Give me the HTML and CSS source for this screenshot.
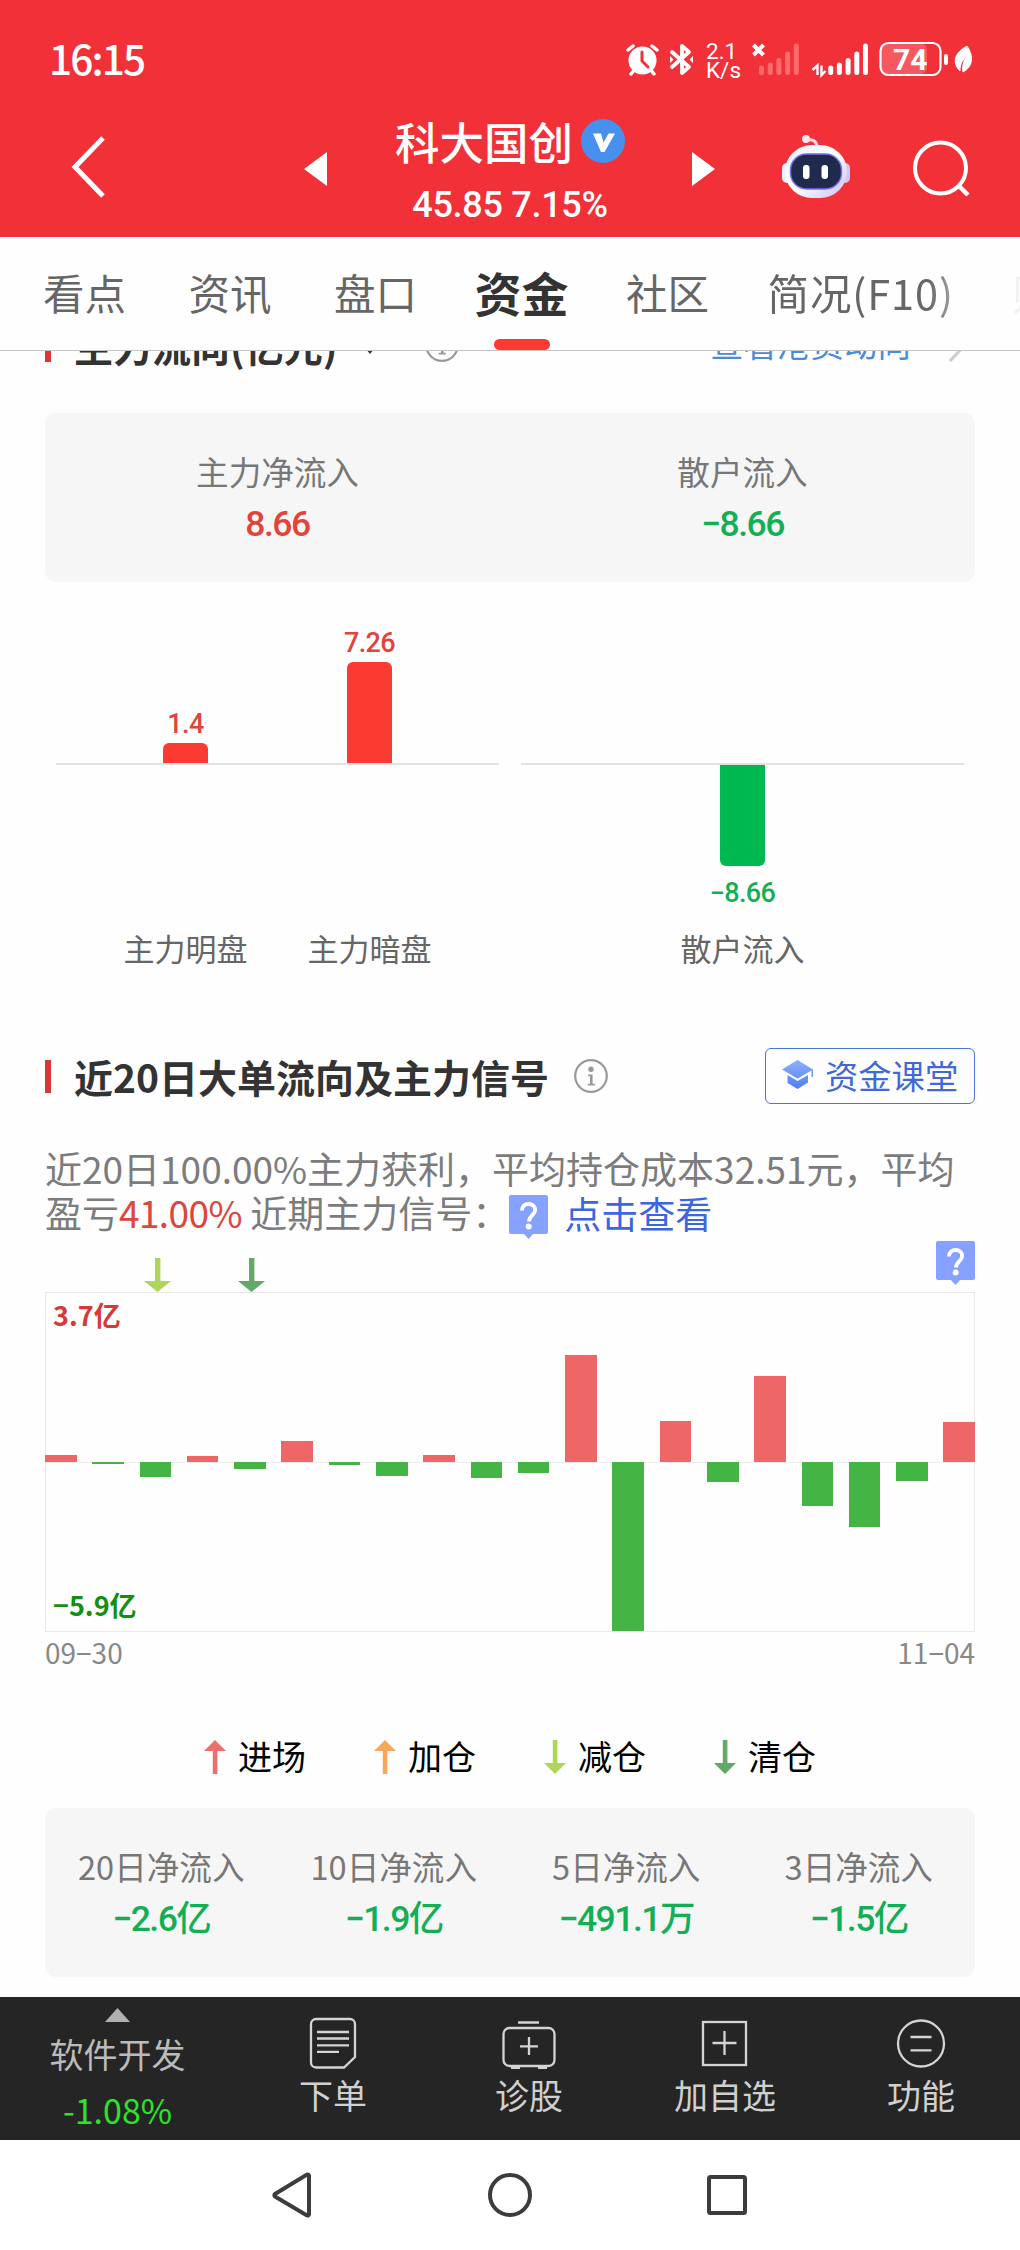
FILE: index.html
```html
<!DOCTYPE html>
<html lang="zh-CN">
<head>
  <meta charset="UTF-8">
  <title>科大国创 - 资金</title>
  <link rel="stylesheet" href="styles.css">
</head>
<body>

  <svg class="defs" width="0" height="0">
    <symbol id="info" viewBox="0 0 34 34">
      <circle cx="17" cy="17" r="15.800" fill="none" stroke="#999" stroke-width="2.200"/>
      <circle cx="17" cy="10.300" r="2.700" fill="#999"/>
      <path d="M14 15.500h4.600v9.200h2.200v1.800h-7v-1.800h2.200v-7.400H14z" fill="#999"/>
    </symbol>
    <symbol id="help" viewBox="0 0 39 44">
      <path d="M2 0h35a2 2 0 0 1 2 2v35a2 2 0 0 1-2 2H24l-4.500 5-4.500-5H2a2 2 0 0 1-2-2V2a2 2 0 0 1 2-2z" fill="#86a1ff"/>
      <path d="M13 15.500c0-4.200 2.700-6.500 6.600-6.500s6.600 2.400 6.600 6c0 5-6.200 5.400-6.200 11.500" fill="none" stroke="#fff" stroke-width="3.800"/>
      <circle cx="19.700" cy="31.500" r="3" fill="#fff"/>
    </symbol>
    <symbol id="down" viewBox="0 0 27 34">
      <path d="M11 0h5.400v23H27L13.500 34 0 23h11z" fill="currentColor"/>
    </symbol>
    <symbol id="up" viewBox="0 0 22 34">
      <path d="M11 0l11 11h-8.600v23H8.800V11H0z" fill="currentColor"/>
    </symbol>
    <symbol id="down-sm" viewBox="0 0 22 34">
      <path d="M11 34l11-11h-8.600V0H8.800v23H0z" fill="currentColor"/>
    </symbol>
  </svg>

  <header class="header">
    <div class="status">
      <span class="time">16:15</span>
      <svg class="status-icons" width="394" height="44" viewBox="0 0 394 44">
        <!-- alarm -->
        <g fill="none" stroke="#fff" stroke-linecap="round">
          <path d="M2 10l5-4M26 6l5 4M5 34l4-5M28 34l-4-5" stroke-width="3.500"/>
        </g>
        <circle cx="16.500" cy="20.500" r="14" fill="#fff"/>
        <path d="M16 12v9l6 6" fill="none" stroke="#f13038" stroke-width="3" stroke-linecap="round"/>
        <!-- bluetooth -->
        <path d="M46 12l17 15-7 6V6l7 6-17 15" fill="none" stroke="#fff" stroke-width="3.800" stroke-linejoin="round" stroke-linecap="round"/>
        <path d="M44 16l3.500 3.500L44 23zM67 16l-3.500 3.500L67 23z" fill="#fff"/>
        <!-- sim 1, no service -->
        <path d="M127.500 5l10 10M137.500 5l-10 10" stroke="#fff" stroke-width="4"/>
        <g stroke="#fff" stroke-width="5" stroke-linecap="round">
          <path d="M135.500 28v4.500M144.200 25v7.500M152.900 20.500v12M161.600 14v18.500M170.300 6v26.500" stroke="#ff6a6f"/>
          <path d="M204.700 28v4.500M213.400 25v7.500M222.100 20.500v12M230.800 14v18.500M239.500 6v26.500"/>
        </g>
        <path d="M191.500 35V25.500l-5 4.500M195.500 25.500V35l4-4" fill="none" stroke="#fff" stroke-width="2.400"/>
        <!-- battery -->
        <rect x="254" y="3" width="47" height="31" rx="7" fill="#f5595f"/>
        <rect x="254.500" y="3" width="60" height="32" rx="8" fill="none" stroke="#fff" stroke-width="2.200"/>
        <rect x="318" y="14" width="4" height="11" rx="2" fill="#fff"/>
        <!-- leaf -->
        <path d="M341 6c7 10 6 21-4 26-1-5 0-10 3-15-5 4-6 9-6 14-8-8-6-18 7-25z" fill="#fff" stroke="#fff"/>
      </svg>
      <span class="speed">2.1<br>K/s</span>
      <span class="battery">74</span>
    </div>

    <div class="titlebar">
      <svg class="back" width="36" height="66" viewBox="0 0 36 66"><path d="M33 4L5 33l28 29" fill="none" stroke="#fff" stroke-width="5"/></svg>
      <svg class="prev" width="24" height="34" viewBox="0 0 24 34"><path d="M23 0v34L0 17z" fill="#fff"/></svg>
      <div class="stock">
        <div class="stock-name">科大国创
          <svg width="44" height="44" viewBox="0 0 44 44"><circle cx="22" cy="22" r="22" fill="#4790ee"/><path d="M12 14.500h8l2.500 9 5-9H34L23.500 33H20z" fill="#fff"/></svg>
        </div>
        <div class="stock-price">45.85 7.15%</div>
      </div>
      <svg class="next" width="24" height="34" viewBox="0 0 24 34"><path d="M0 0v34l23-17z" fill="#fff"/></svg>
      <svg class="robot" width="70" height="66" viewBox="0 0 70 66">
        <defs>
          <linearGradient id="shell" x1="0" y1="0" x2="1" y2="1">
            <stop offset="0" stop-color="#e9f1ff"/>
            <stop offset=".5" stop-color="#fff"/>
            <stop offset="1" stop-color="#c9bdf5"/>
          </linearGradient>
        </defs>
        <path d="M25 6c6-1 11 0 11 8" fill="none" stroke="#fbdde6" stroke-width="3"/>
        <circle cx="25" cy="5" r="4" fill="#fde4ea"/>
        <rect x="1" y="29" width="10" height="20" rx="5" fill="#e8eeff"/>
        <rect x="59" y="29" width="10" height="20" rx="5" fill="#cfc6f4"/>
        <rect x="4" y="11" width="62" height="53" rx="27" fill="url(#shell)"/>
        <rect x="9.500" y="20" width="51" height="35" rx="16" fill="#202a4d" stroke="#7a6ff0" stroke-width="1.500"/>
        <rect x="22" y="31" width="6.500" height="14" rx="3" fill="#fff"/>
        <rect x="40.500" y="31" width="6.500" height="14" rx="3" fill="#fff"/>
      </svg>
      <svg class="search" width="60" height="60" viewBox="0 0 60 60"><circle cx="28.500" cy="28" r="25.500" fill="none" stroke="#fff" stroke-width="4"/><path d="M46 45l10 10" stroke="#fff" stroke-width="4.500"/></svg>
    </div>
  </header>

  <nav class="tabs">
    <span>看点</span>
    <span>资讯</span>
    <span>盘口</span>
    <span class="active">资金</span>
    <span>社区</span>
    <span class="brief">简况(F10)</span>
    <span>财务</span>
  </nav>

  <main class="content">
    <div class="section-head first">
      <h2>主力流向(亿元)</h2>
      <svg class="caret" width="18" height="11" viewBox="0 0 18 11"><path d="M0 0h18L9 11z" fill="#333"/></svg>
      <svg class="info" width="34" height="34"><use href="#info"/></svg>
      <a class="more">查看港资动向</a>
      <svg class="chevron" width="20" height="36" viewBox="0 0 20 36"><path d="M2 2l15 16L2 34" fill="none" stroke="#ccc" stroke-width="3"/></svg>
    </div>

    <div class="card">
      <div><p>主力净流入</p><b class="red">8.66</b></div>
      <div><p>散户流入</p><b class="green">−8.66</b></div>
    </div>

    <div class="flow">
      <div class="plot">
        <div class="above">
          <div class="col"><span class="red">1.4</span><i class="bar red-bar" style="height: 20px"></i></div>
          <div class="col"><span class="red">7.26</span><i class="bar red-bar" style="height: 101px"></i></div>
        </div>
        <div class="below"></div>
        <div class="names"><span>主力明盘</span><span>主力暗盘</span></div>
      </div>
      <div class="plot">
        <div class="above"></div>
        <div class="below">
          <div class="col"><i class="bar green-bar" style="height: 101px"></i><span class="green">−8.66</span></div>
        </div>
        <div class="names"><span>散户流入</span></div>
      </div>
    </div>

    <div class="section-head">
      <h2>近20日大单流向及主力信号</h2>
      <svg class="info" width="34" height="34"><use href="#info"/></svg>
      <a class="class-btn">
        <svg width="32" height="29" viewBox="0 0 32 29">
          <defs><linearGradient id="cap" x1="0" y1="0" x2="0" y2="1"><stop offset="0" stop-color="#8fb0ff"/><stop offset="1" stop-color="#4c7ef5"/></linearGradient></defs>
          <path d="M15.500 0L31 9.500V17h-1.500v-6.500L15.500 18.500 0 9.500zM5.500 15l10 6 10.500-6v7.500L15.500 29l-10-6z" fill="url(#cap)"/>
        </svg>
        资金课堂
      </a>
    </div>

    <p class="summary">近20日100.00%主力获利，平均持仓成本32.51元，平均<br>盈亏<em>41.00%</em> 近期主力信号：<svg width="39" height="44"><use href="#help"/></svg><a>点击查看</a></p>

    <div class="marks">
      <svg class="light" width="27" height="34"><use href="#down"/></svg>
      <svg class="dark" width="27" height="34"><use href="#down"/></svg>
      <svg class="help" width="39" height="44"><use href="#help"/></svg>
    </div>
    <div class="chart">
      <span class="max">3.7亿</span>
      <span class="min">−5.9亿</span>
      <div class="bars" id="bars"></div>
    </div>
    <div class="dates"><span>09−30</span><span>11−04</span></div>

    <div class="legend">
      <div><svg class="in" width="22" height="34"><use href="#up"/></svg><span>进场</span></div>
      <div><svg class="add" width="22" height="34"><use href="#up"/></svg><span>加仓</span></div>
      <div><svg class="light" width="22" height="34"><use href="#down-sm"/></svg><span>减仓</span></div>
      <div><svg class="dark" width="22" height="34"><use href="#down-sm"/></svg><span>清仓</span></div>
    </div>

    <div class="card totals">
      <div><p>20日净流入</p><b class="green">−2.6亿</b></div>
      <div><p>10日净流入</p><b class="green">−1.9亿</b></div>
      <div><p>5日净流入</p><b class="green">−491.1万</b></div>
      <div><p>3日净流入</p><b class="green">−1.5亿</b></div>
    </div>
    <div class="updated">更新</div>
  </main>

  <footer class="toolbar">
    <div class="industry">
      <svg width="25" height="14" viewBox="0 0 25 14"><path d="M12.500 0L25 14H0z" fill="#b0b0b0"/></svg>
      <span>软件开发</span>
      <span class="pct">-1.08%</span>
    </div>
    <div class="tool">
      <svg width="54" height="52" viewBox="0 0 54 52" fill="none" stroke="#d4d4d4" stroke-width="2.300">
        <path d="M10 2h34a5 5 0 0 1 5 5v33L38 50.500H10a5 5 0 0 1-5-5V7a5 5 0 0 1 5-5z"/>
        <path d="M11 15h32M11 21.500h32M11 28.300h32M11 34.800h22"/>
      </svg>
      <span>下单</span>
    </div>
    <div class="tool">
      <svg width="54" height="52" viewBox="0 0 54 52" fill="none" stroke="#d4d4d4" stroke-width="2.300">
        <rect x="1.500" y="11" width="51" height="38" rx="6"/>
        <path d="M16 5.500h21M27 20v18M18 29.300h18M9 51h9M36 51h9"/>
      </svg>
      <span>诊股</span>
    </div>
    <div class="tool">
      <svg width="54" height="52" viewBox="0 0 54 52" fill="none" stroke="#d4d4d4" stroke-width="2.300">
        <rect x="5" y="5" width="43" height="43"/>
        <path d="M26.500 14v24M14.500 26h24"/>
      </svg>
      <span>加自选</span>
    </div>
    <div class="tool">
      <svg width="54" height="52" viewBox="0 0 54 52" fill="none" stroke="#d4d4d4" stroke-width="2.300">
        <circle cx="27" cy="26.500" r="23"/>
        <path d="M16.500 20h21M16.500 33.300h21"/>
      </svg>
      <span>功能</span>
    </div>
  </footer>

  <div class="sysnav">
    <svg width="46" height="46" viewBox="0 0 46 46"><path d="M39 3.500v39a1.500 1.500 0 0 1-2 1L5 24.500a1.500 1.500 0 0 1 0-2.500L37 2.500a1.500 1.500 0 0 1 2 1z"/></svg>
    <svg width="46" height="46" viewBox="0 0 46 46"><circle cx="23" cy="23" r="20"/></svg>
    <svg width="46" height="46" viewBox="0 0 46 46"><rect x="5" y="5" width="36" height="36" rx="1.500"/></svg>
  </div>

  <script>
    // bar heights in px, negative values go below the zero line
    const flows = [7, -2, -15, 6, -7, 21.5, -3, -14, 7, -16, -11, 107, -169, 41, -20, 86.5, -44, -65, -19, 40];
    const bars = document.getElementById('bars');

    flows.forEach(value => {
      const bar = document.createElement('i');
      bar.className = value > 0 ? 'plus' : 'minus';
      bar.style.height = Math.abs(value) + 'px';
      bars.appendChild(bar);
    });
  </script>

</body>
</html>
```

FILE: styles.css
```css
* {
  box-sizing: border-box;
  margin: 0;
  padding: 0;
}

body {
  width: 1020px;
  height: 2250px;
  overflow: hidden;
  background: #fefefe;
  color: #333;
  font-family: "Noto Sans CJK SC", sans-serif;
}

svg {
  display: block;
  flex: none;
}

.defs {
  position: absolute;
}

.red {
  color: #e0443c;
}

.green {
  color: #14ae55;
}

/* header */
.header {
  height: 237px;
  background: #f13038;
  color: #fff;
}

.status {
  position: relative;
  display: flex;
  height: 100px;
  padding: 40px 0 0 49px;
}

.time {
  width: 577px;
  font-size: 40.5px;
  font-weight: 500;
  line-height: 36px;
  letter-spacing: -1.8px;
}

.speed {
  position: absolute;
  left: 706px;
  top: 42px;
  font: 400 22.5px/19px "Roboto", sans-serif;
}

.battery {
  position: absolute;
  left: 893px;
  top: 44px;
  font: bold 30px/32px "Roboto", sans-serif;
}

.titlebar {
  display: flex;
  padding-left: 70px;
}

.back {
  margin-top: 34px;
}

.prev {
  margin: 52px 0 0 198px;
}

.stock {
  width: 364px;
  padding-top: 14px;
  text-align: center;
}

.stock-name {
  display: flex;
  justify-content: center;
  align-items: center;
  gap: 8px;
  height: 56px;
  padding-bottom: 2px;
  font-size: 44.5px;
  font-weight: 500;
  line-height: 50px;
}

.stock-price {
  font: 500 36px/40px "Roboto", sans-serif;
  letter-spacing: -0.3px;
  margin-top: 15px;
}

.next {
  margin-top: 52px;
}

.robot {
  margin: 34px 0 0 65px;
}

.search {
  margin: 40px 0 0 61px;
}

/* tabs */
.tabs {
  display: flex;
  gap: 62.5px;
  height: 114px;
  padding-left: 43px;
  overflow: hidden;
  border-bottom: 1px solid #c4c4c4;
  color: #666;
  font-size: 41.5px;
  line-height: 110px;
  white-space: nowrap;
}

.tabs .brief {
  margin-left: -4px;
  letter-spacing: 0.9px;
  -webkit-mask-image: linear-gradient(90deg, #000 86%, rgba(0, 0, 0, 0.6));
  mask-image: linear-gradient(90deg, #000 86%, rgba(0, 0, 0, 0.6));
}

.tabs span:last-child {
  margin-left: -4px;
  opacity: 0.08;
}

.tabs .active {
  display: flex;
  flex-direction: column;
  align-items: center;
  height: 113px;
  margin: 0 -5px;
  color: #333;
  font-size: 47px;
  font-weight: bold;
}

.tabs .active::after {
  content: "";
  flex: none;
  width: 56px;
  height: 11px;
  margin-top: -8px;
  border-radius: 6px;
  background: #fa3b32;
}

/* content */
.content {
  height: 1646px;
  padding: 0 45px;
  overflow: hidden;
}

.section-head {
  display: flex;
  align-items: center;
  height: 56px;
}

.section-head.first {
  margin-top: -34px;
}

.section-head h2 {
  padding-left: 23px;
  border-left: 6px solid #d93636;
  font-size: 39px;
  font-weight: bold;
  line-height: 33px;
}

.caret {
  margin: 6px 0 0 24px;
}

.info {
  margin-left: 25px;
}

.caret + .info {
  margin-left: 46px;
}

.more {
  margin: -5px 37px 0 auto;
  color: #4a8cd8;
  font-size: 33.5px;
  line-height: 40px;
}

.chevron {
  margin-right: 7px;
}

.class-btn {
  display: flex;
  align-items: center;
  gap: 11px;
  width: 210px;
  height: 56px;
  margin-left: auto;
  padding: 0 0 3px 16px;
  border: 1.5px solid #4a74d8;
  border-radius: 6px;
  color: #4069d6;
  font-size: 33.3px;
  line-height: 46px;
  white-space: nowrap;
}

.card {
  display: flex;
  height: 169px;
  margin-top: 40px;
  padding-top: 38px;
  border-radius: 11px;
  background: #f6f6f6;
  text-align: center;
}

.card div {
  flex: 1;
}

.card p {
  color: #777;
  font-size: 32.6px;
  line-height: 40px;
}

.card b {
  display: block;
  margin-top: 13px;
  font-family: "Roboto", "Noto Sans CJK SC", sans-serif;
  font-size: 35.5px;
  font-weight: 500;
  line-height: 40px;
  letter-spacing: -1.5px;
}

.flow {
  display: flex;
  gap: 22px;
  padding: 0 11px;
}

.plot {
  flex: 1;
}

.above,
.below,
.names {
  display: flex;
  justify-content: center;
}

.above {
  align-items: flex-end;
  height: 183px;
  border-bottom: 2px solid #e2e2e2;
}

.below {
  height: 166px;
}

.col {
  display: flex;
  flex-direction: column;
  align-items: center;
  width: 184px;
  font: 500 27px/30px "Roboto", sans-serif;
  letter-spacing: -0.6px;
}

.bar {
  width: 45px;
}

.red-bar {
  margin-top: 4px;
  border-radius: 6px 6px 0 0;
  background: #fb3b32;
}

.green-bar {
  margin-bottom: 12px;
  border-radius: 0 0 6px 6px;
  background: #00b850;
}

.names {
  margin-bottom: 83px;
  color: #666;
  font-size: 31px;
  line-height: 34px;
  text-align: center;
}

.names span {
  width: 184px;
}

.summary {
  margin-top: 43px;
  height: 86px;
  color: #7c7c7c;
  font-size: 37px;
  line-height: 43.5px;
  white-space: nowrap;
}

.summary em {
  color: #dd453d;
  font-style: normal;
  letter-spacing: -0.6px;
}

.summary svg {
  display: inline-block;
  margin: -10px 16px -10px 0;
  vertical-align: -1px;
}

.summary a {
  position: relative;
  top: 1px;
  color: #3b66dd;
}

.marks {
  display: flex;
  align-items: flex-end;
  gap: 67px;
  height: 51px;
  margin-top: 8px;
  padding-left: 99px;
}

.light {
  color: #afd65a;
}

.dark {
  color: #62a968;
}

.in {
  color: #ee6e6c;
}

.add {
  color: #f9a75c;
}

.help {
  align-self: flex-start;
  margin-left: auto;
}

/* daily flow chart */
.chart {
  position: relative;
  height: 340px;
  border: 1px solid #e9e9e9;
  background: linear-gradient(#ededed, #ededed) 0 169px / 100% 1px no-repeat;
}

.max,
.min {
  position: absolute;
  left: 7px;
  font-size: 27px;
  font-weight: bold;
  line-height: 30px;
}

.max {
  top: 7px;
  color: #d33a38;
}

.min {
  bottom: 11px;
  color: #119011;
}

.bars {
  display: flex;
  justify-content: space-between;
  height: 338px;
  margin: 0 -1px;
}

.bars i {
  width: 31.6px;
}

.plus {
  align-self: flex-end;
  margin-bottom: 169px;
  background: #ee6666;
}

.minus {
  margin-top: 169px;
  background: #44b444;
}

.dates {
  display: flex;
  justify-content: space-between;
  margin-top: 4px;
  color: #888;
  font-size: 28px;
  line-height: 32px;
}

.legend {
  display: flex;
  justify-content: center;
  gap: 68px;
  height: 34px;
  margin-top: 72px;
}

.legend div {
  display: flex;
  gap: 12px;
  width: 102px;
  color: #000;
  font-size: 34px;
  line-height: 32px;
}

.totals {
  margin-top: 34px;
}

.updated {
  margin-top: 19px;
  padding-left: 664px;
  color: #aaa;
  font-size: 28px;
  line-height: 28px;
}

/* bottom bars */
.toolbar {
  display: flex;
  height: 143px;
  background: #252525;
  color: #d0d0d0;
  font-size: 34px;
  line-height: 40px;
}

.industry,
.tool {
  display: flex;
  flex-direction: column;
  align-items: center;
}

.industry {
  width: 235px;
  padding-top: 11px;
  color: #bbb;
}

.industry span {
  margin-top: 12px;
}

.industry .pct {
  margin-top: 16px;
  color: #2be32b;
}

.tool {
  width: 196px;
  padding-top: 20px;
}

.tool span {
  margin-top: 6px;
}

.sysnav {
  display: flex;
  justify-content: center;
  gap: 171px;
  height: 110px;
  padding-top: 32px;
  background: #fff;
}

.sysnav svg {
  fill: none;
  stroke: #3c3c3c;
  stroke-width: 4;
}
```
